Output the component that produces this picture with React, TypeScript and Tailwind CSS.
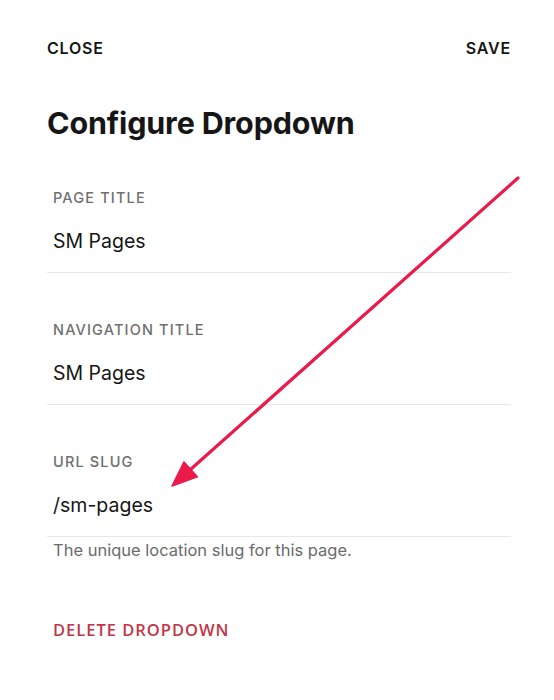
const fields = [
  { label: "PAGE TITLE", value: "SM Pages" },
  { label: "NAVIGATION TITLE", value: "SM Pages" },
  { label: "URL SLUG", value: "/sm-pages" },
];

// Annotation arrow drawn on top of the panel
function Arrow() {
  const x1 = 518;
  const y1 = 178;
  const tx = 172;
  const ty = 486;
  const dx = tx - x1;
  const dy = ty - y1;
  const len = Math.hypot(dx, dy);
  const ux = dx / len;
  const uy = dy / len;
  const head = 25;
  const half = 10;
  const bx = tx - ux * head;
  const by = ty - uy * head;
  const p1 = `${bx - uy * half},${by + ux * half}`;
  const p2 = `${bx + uy * half},${by - ux * half}`;
  return (
    <svg className="pointer-events-none absolute inset-0" width="554" height="700" viewBox="0 0 554 700">
      <line x1={x1} y1={y1} x2={bx + ux * 4} y2={by + uy * 4} stroke="#ea1a4b" strokeWidth="3.2" strokeLinecap="round" />
      <polygon points={`${tx},${ty} ${p1} ${p2}`} fill="#ea1a4b" stroke="#ea1a4b" strokeWidth="1.5" strokeLinejoin="round" />
    </svg>
  );
}

export default function App() {
  return (
    <div className="relative h-[700px] w-full overflow-hidden bg-white font-['Inter',sans-serif] text-[#161616]">
      <div className="flex justify-between pl-[47px] pr-[43px] pt-[38px] text-[16px] font-semibold leading-[20px] tracking-[0.05em]">
        <span>CLOSE</span>
        <span>SAVE</span>
      </div>

      <h1 className="mt-[47px] px-[47px] text-[30.5px] font-bold leading-[36px] tracking-[-0.005em]">
        Configure Dropdown
      </h1>

      <div className="pl-[47px] pr-[43px]">
        {fields.map((f) => (
          <div key={f.label} className="border-b border-[#e8e8e8] pb-[17px] pl-[6px] pt-[47px]">
            <div className="text-[14.5px] font-medium leading-[20px] tracking-[0.08em] text-[#6f6f6f]">
              {f.label}
            </div>
            <div className="mt-[19px] text-[19.5px] leading-[28px]">{f.value}</div>
          </div>
        ))}
        <p className="mt-[3px] pl-[6px] text-[16.5px] leading-[20px] text-[#6b6b6b]">
          The unique location slug for this page.
        </p>
        <button className="mt-[60px] pl-[6px] font-['Open_Sans',sans-serif] text-[16.5px] font-semibold leading-[20px] tracking-[0.06em] text-[#c23548]">
          DELETE DROPDOWN
        </button>
      </div>

      <Arrow />
    </div>
  );
}
